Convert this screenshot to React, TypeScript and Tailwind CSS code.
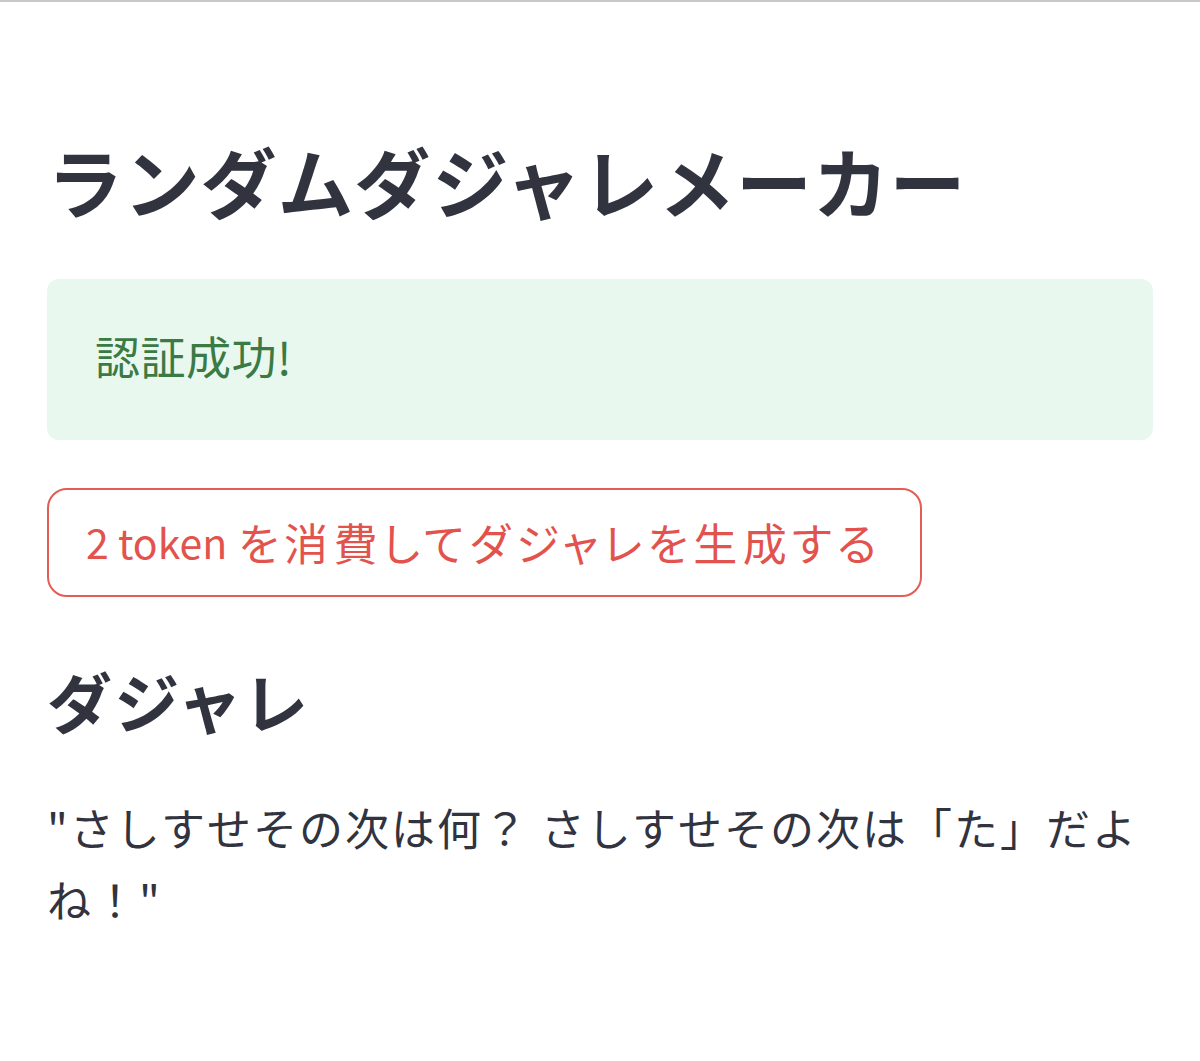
export default function App() {
  return (
    <div className="min-h-screen bg-white text-[#31333f] font-['Noto_Sans_CJK_JP',sans-serif]">
      <div className="h-[2px] bg-[#c9c9c9]" />

      <main className="px-[47px] pt-[133px]">
        <h1 className="text-[76px] leading-[91px] font-bold tracking-[0.8px]">
          ランダムダジャレメーカー
        </h1>

        {/* success alert */}
        <div className="mt-[53px] h-[161px] flex items-center rounded-[12px] bg-[#e9f8ee] px-[48px] pb-[8px]">
          <p className="text-[45px] leading-none text-[#3b7a45] tracking-[0.5px]">認証成功!</p>
        </div>

        <button className="mt-[48px] h-[109px] flex items-center gap-[11px] rounded-[20px] border-2 border-[#e35c56] bg-white pl-[37px] pr-[38px] pb-[2px] text-[41px] text-[#e3534e]">
          <span>2 token</span>
          <span className="text-[44px] tracking-[5.3px] [font-feature-settings:'palt']">を消費してダジャレを生成する</span>
        </button>

        <h2 className="mt-[65px] text-[65px] leading-[77px] font-bold tracking-[1px]">ダジャレ</h2>

        <p className="mt-[52px] text-[44px] leading-[72px] tracking-[2px]">
          "さしすせその次は何？ さしすせその次は「た」だよね！"
        </p>
      </main>
    </div>
  )
}
